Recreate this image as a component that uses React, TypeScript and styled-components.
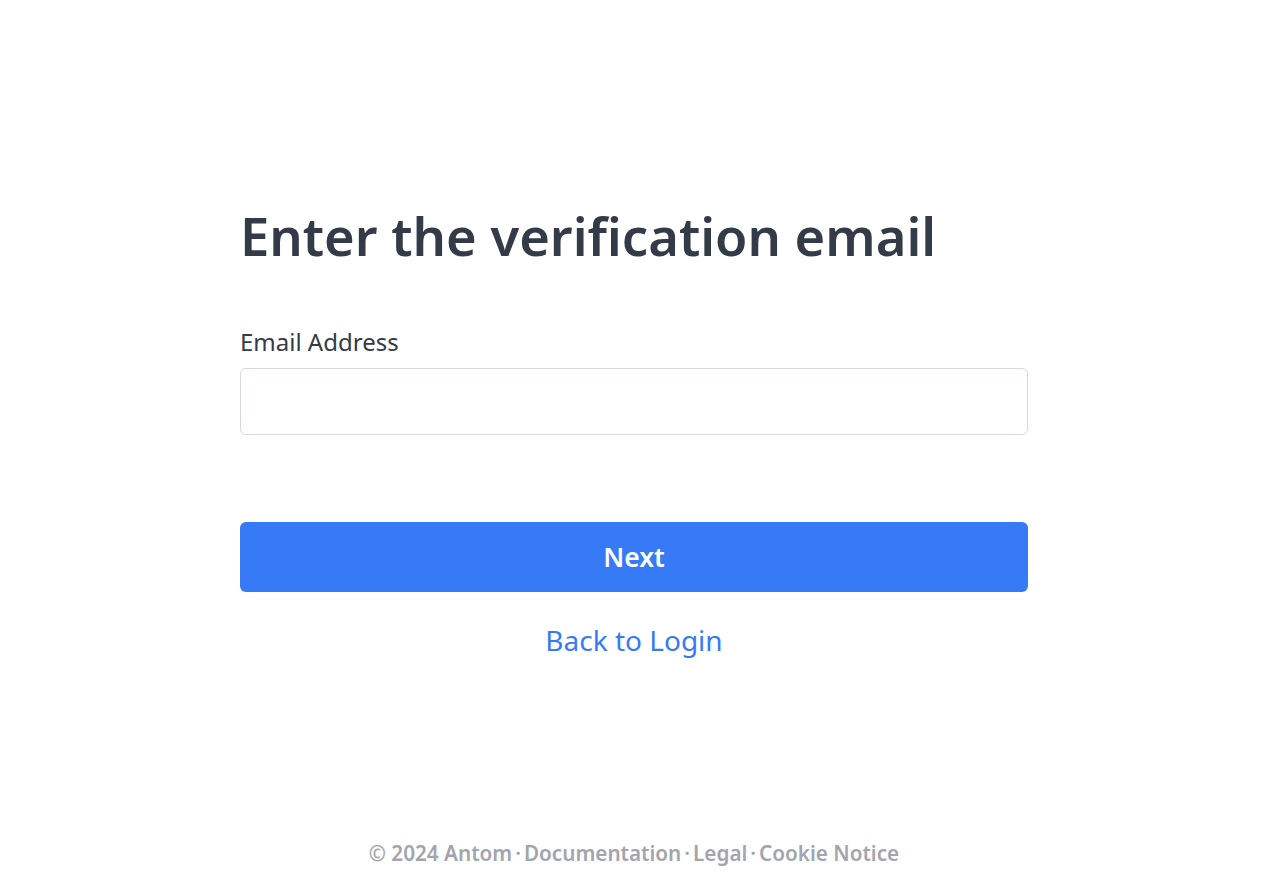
import React from "react";
import styled, { createGlobalStyle } from "styled-components";

const Global = createGlobalStyle`
  html, body { margin: 0; padding: 0; background: #fff; }
  body { font-family: "Noto Sans", "Open Sans", sans-serif; }
  * { box-sizing: border-box; }
`;

const Page = styled.div`
  min-height: 878px;
  display: flex;
  flex-direction: column;
  align-items: center;
`;

const Main = styled.main`
  flex: 1;
  width: 788px;
  padding-top: 202px;
  display: flex;
  flex-direction: column;
`;

const Title = styled.h1`
  margin: 0;
  font-size: 52.5px;
  line-height: 68px;
  font-weight: 600;
  color: #333a48;
  letter-spacing: 0;
`;

const Label = styled.label`
  margin-top: 58px;
  font-size: 24px;
  line-height: 28px;
  color: #333a48;
`;

const Input = styled.input`
  margin-top: 12px;
  height: 67px;
  border: 1.5px solid #d3d9e4;
  border-radius: 6px;
  padding: 0 16px;
  font-size: 20px;
  font-family: inherit;
  outline: none;
`;

const Button = styled.button`
  margin-top: 87px;
  height: 70px;
  border: none;
  border-radius: 6px;
  background: #367bf5;
  color: #fff;
  font-family: inherit;
  font-size: 26.5px;
  font-weight: 600;
  cursor: pointer;
`;

const BackLink = styled.a`
  margin-top: 30px;
  align-self: center;
  font-size: 28px;
  line-height: 36px;
  color: #367bf5;
  text-decoration: none;
`;

const Footer = styled.footer`
  padding-bottom: 13px;
  font-size: 20.7px;
  line-height: 24px;
  font-weight: 600;
  color: #a2a5ad;
  display: flex;
  align-items: center;
`;

const Dot = styled.span`
  margin: 0 3px;
`;

export default function App() {
  return (
    <>
      <Global />
      <Page>
        <Main>
          <Title>Enter the verification email</Title>
          <Label htmlFor="email">Email Address</Label>
          <Input id="email" type="email" />
          <Button>Next</Button>
          <BackLink href="#">Back to Login</BackLink>
        </Main>
        <Footer>
          <span>© 2024 Antom</span>
          <Dot>·</Dot>
          <span>Documentation</span>
          <Dot>·</Dot>
          <span>Legal</span>
          <Dot>·</Dot>
          <span>Cookie Notice</span>
        </Footer>
      </Page>
    </>
  );
}
